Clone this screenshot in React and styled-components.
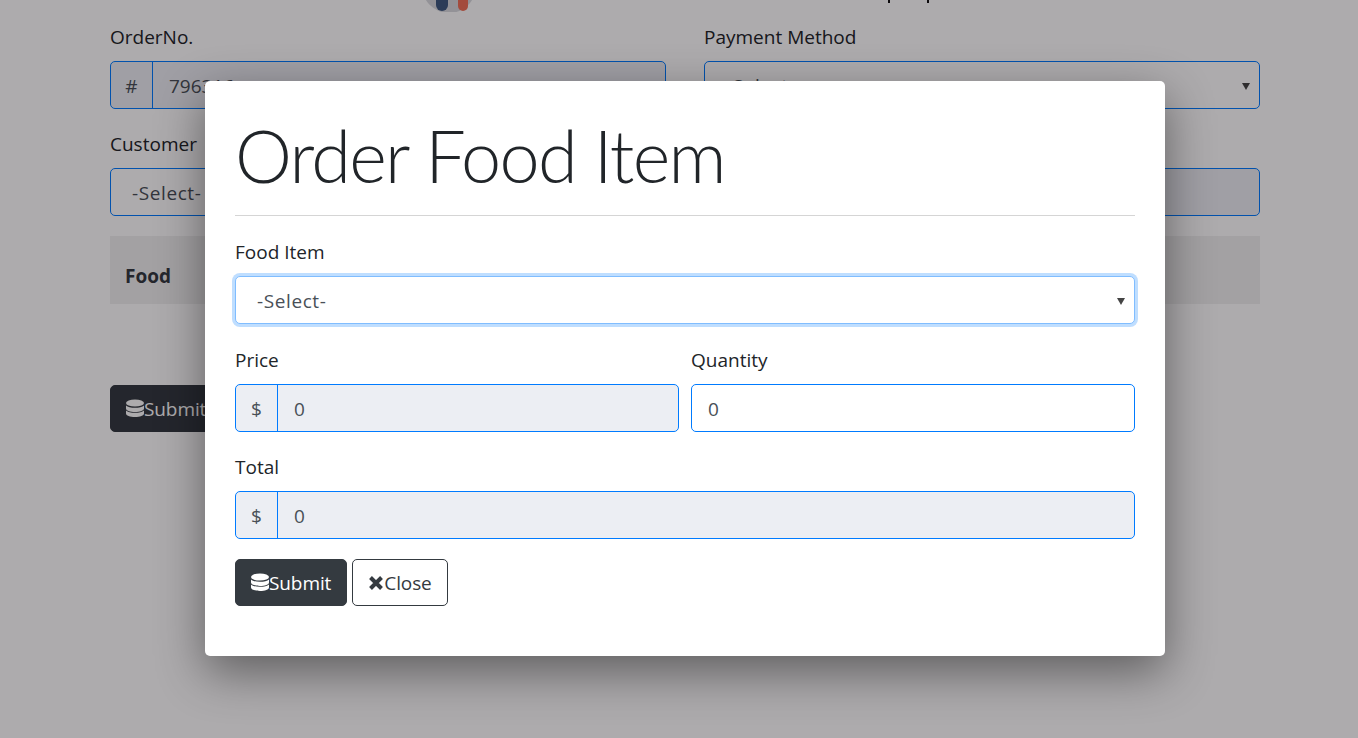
import React from "react";
import styled, { createGlobalStyle } from "styled-components";

const uiFont = `"Open Sans", "Noto Sans", "Liberation Sans", sans-serif`;

const GlobalStyle = createGlobalStyle`
  html, body {
    margin: 0;
    height: 100%;
    overflow: hidden;
    background: #fff;
    font-family: ${uiFont};
    color: #212529;
  }
`;

const Page = styled.div`
  height: 738px;
  overflow: hidden;
  position: relative;
  box-sizing: border-box;
  padding: 0 98px 0 110px;
`;

const TopBar = styled.div`
  height: 12px;
  display: flex;
  align-items: flex-start;
  padding-left: 310px;
  margin-bottom: 13px;
`;

const Row = styled.div`
  display: grid;
  grid-template-columns: 556px 556px;
  column-gap: 38px;

  & + & {
    margin-top: 23px;
  }
`;

const Label = styled.label`
  display: block;
  font-size: 19px;
  line-height: 24px;
  margin-bottom: 12px;
  min-height: 24px;
  color: #212529;
`;

const Group = styled.div`
  display: flex;
  height: 48px;
  box-sizing: border-box;
  border: 1px solid #007bff;
  border-radius: 5px;
  overflow: hidden;
  background: ${(p) => (p.$plain ? "#fff" : "#eceef3")};
`;

const Addon = styled.span`
  width: 42px;
  flex: none;
  display: flex;
  align-items: center;
  justify-content: center;
  padding-top: 2px;
  box-sizing: border-box;
  border-right: 1px solid #007bff;
  font-size: 19px;
  color: #495057;
`;

const Value = styled.span`
  flex: 1;
  display: flex;
  align-items: center;
  padding: 2px 16px 0;
  font-size: 19px;
  color: #495057;
`;

const SelectBox = styled.div`
  height: 48px;
  box-sizing: border-box;
  border: 1px solid #007bff;
  border-radius: 5px;
  background: #fff;
  display: flex;
  align-items: center;
  padding: 2px 9px 0 21px;
  font-size: 19px;
  letter-spacing: 0.6px;
  color: #495057;
  justify-content: space-between;
  ${(p) =>
    p.$focus &&
    `
    border-color: #80bdff;
    box-shadow: 0 0 0 3px rgba(0, 123, 255, 0.25);
  `}
`;

const Caret = styled.span`
  width: 0;
  height: 0;
  border-left: 4px solid transparent;
  border-right: 4px solid transparent;
  border-top: 7px solid #444;
`;

const TableHead = styled.div`
  height: 68px;
  background: #f0f0f0;
  display: flex;
  align-items: flex-end;
  padding: 0 15px 15px;
  margin-top: 20px;
  font-size: 19px;
  line-height: 26px;
  font-weight: 700;
  color: #343a40;
  width: 1150px;
  box-sizing: border-box;
`;

const Button = styled.button`
  height: 47px;
  box-sizing: border-box;
  border-radius: 5px;
  border: 1px solid #343a40;
  background: ${(p) => (p.$dark ? "#343a40" : "#fff")};
  color: ${(p) => (p.$dark ? "#fff" : "#343a40")};
  font-family: ${uiFont};
  font-size: 19px;
  letter-spacing: -0.1px;
  display: inline-flex;
  align-items: center;
  padding: 0 15px;
`;

const PageSubmit = styled(Button)`
  margin-top: 81px;
`;

const Backdrop = styled.div`
  position: absolute;
  inset: 0;
  background: rgba(5, 0, 5, 0.33);
`;

const Modal = styled.div`
  position: absolute;
  left: 205px;
  top: 81px;
  width: 960px;
  height: 575px;
  box-sizing: border-box;
  padding: 30px;
  background: #fff;
  border-radius: 5px;
  box-shadow: 0 16px 48px rgba(0, 0, 0, 0.45);
`;

const Title = styled.h1`
  margin: 0;
  height: 105px;
  font-family: Lato, ${uiFont};
  font-size: 72px;
  line-height: 88px;
  font-weight: 300;
  letter-spacing: -1.7px;
  color: #212529;
  border-bottom: 1px solid #d5d5d5;
  box-sizing: border-box;
`;

const Fields = styled.div`
  display: grid;
  row-gap: 23.5px;
  padding-top: 24px;
`;

const TwoCols = styled.div`
  display: grid;
  grid-template-columns: 444px 444px;
  column-gap: 12px;
`;

const Actions = styled.div`
  display: flex;
  gap: 5px;
  margin-top: 20px;
`;

function DatabaseIcon() {
  return (
    <svg width="18" height="20" viewBox="0 0 18 20" fill="currentColor">
      <ellipse cx="9" cy="4" rx="9" ry="3.6" />
      <path d="M0 6.4c1.6 1.6 5 2.4 9 2.4s7.4-.8 9-2.4v3c0 2-4 3.5-9 3.5S0 11.4 0 9.4z" />
      <path d="M0 11.4c1.6 1.6 5 2.4 9 2.4s7.4-.8 9-2.4v3c0 2-4 3.5-9 3.5s-9-1.5-9-3.5z" />
    </svg>
  );
}

function CloseIcon() {
  return (
    <svg width="16" height="16" viewBox="0 0 16 16" fill="none" stroke="currentColor" strokeWidth="4">
      <path d="M2.5 2.5l11 11M13.5 2.5l-11 11" />
    </svg>
  );
}

// only the bottom of the logo and two descenders of the header show above the form
function HeaderRemains() {
  return (
    <svg width="530" height="12" viewBox="0 0 530 12">
      <circle cx="29" cy="-14" r="27" fill="#d8dade" />
      <rect x="16" y="-6" width="12" height="17" rx="6" fill="#3f5a80" />
      <rect x="38" y="-6" width="10" height="17" rx="5" fill="#f07058" />
      <rect x="468" y="0" width="2" height="3" fill="#111" />
      <rect x="507" y="0" width="2" height="3" fill="#111" />
    </svg>
  );
}

export default function App() {
  return (
    <Page>
      <GlobalStyle />
      <TopBar>
        <HeaderRemains />
      </TopBar>
      <Row>
        <div>
          <Label>OrderNo.</Label>
          <Group>
            <Addon>#</Addon>
            <Value>796316</Value>
          </Group>
        </div>
        <div>
          <Label>Payment Method</Label>
          <SelectBox>
            -Select-
            <Caret />
          </SelectBox>
        </div>
      </Row>
      <Row>
        <div>
          <Label>Customer</Label>
          <SelectBox>
            -Select-
            <Caret />
          </SelectBox>
        </div>
        <div>
          <Label />
          <Group />
        </div>
      </Row>
      <TableHead>Food</TableHead>
      <PageSubmit $dark>
        <DatabaseIcon />
        Submit
      </PageSubmit>
      <Backdrop />
      <Modal>
        <Title>Order Food Item</Title>
        <Fields>
          <div>
            <Label>Food Item</Label>
            <SelectBox $focus>
              -Select-
              <Caret />
            </SelectBox>
          </div>
          <TwoCols>
            <div>
              <Label>Price</Label>
              <Group>
                <Addon>$</Addon>
                <Value>0</Value>
              </Group>
            </div>
            <div>
              <Label>Quantity</Label>
              <Group $plain>
                <Value>0</Value>
              </Group>
            </div>
          </TwoCols>
          <div>
            <Label>Total</Label>
            <Group>
              <Addon>$</Addon>
              <Value>0</Value>
            </Group>
          </div>
        </Fields>
        <Actions>
          <Button $dark>
            <DatabaseIcon />
            Submit
          </Button>
          <Button>
            <CloseIcon />
            Close
          </Button>
        </Actions>
      </Modal>
    </Page>
  );
}
